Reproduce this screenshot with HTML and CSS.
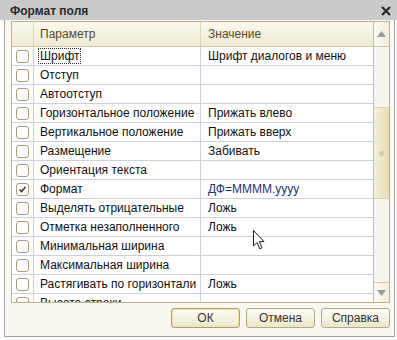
FILE: index.html
```html
<!DOCTYPE html>
<html lang="ru">
<head>
    <meta charset="UTF-8">
    <title>Формат поля</title>
    <link rel="stylesheet" href="styles.css">
</head>
<body>
    <div class="window">
        <div class="titlebar">
            <span class="title">Формат поля</span>
            <svg class="close" width="10" height="10" viewBox="0 0 10 10">
                <path d="M1 1 L9 9 M9 1 L1 9" stroke="#2b2b2b" stroke-width="2.2" fill="none"/>
            </svg>
        </div>

        <div class="dialog">
            <div class="table">
                <div class="grid">
                    <div class="row head">
                        <div class="cell check"></div>
                        <div class="cell">Параметр</div>
                        <div class="cell">Значение</div>
                    </div>
                    <div class="row">
                        <div class="cell check"><span class="box"></span></div>
                        <div class="cell"><span class="focus">Шрифт</span></div>
                        <div class="cell">Шрифт диалогов и меню</div>
                    </div>
                    <div class="row">
                        <div class="cell check"><span class="box"></span></div>
                        <div class="cell">Отступ</div>
                        <div class="cell"></div>
                    </div>
                    <div class="row">
                        <div class="cell check"><span class="box"></span></div>
                        <div class="cell">Автоотступ</div>
                        <div class="cell"></div>
                    </div>
                    <div class="row">
                        <div class="cell check"><span class="box"></span></div>
                        <div class="cell">Горизонтальное положение</div>
                        <div class="cell">Прижать влево</div>
                    </div>
                    <div class="row">
                        <div class="cell check"><span class="box"></span></div>
                        <div class="cell">Вертикальное положение</div>
                        <div class="cell">Прижать вверх</div>
                    </div>
                    <div class="row">
                        <div class="cell check"><span class="box"></span></div>
                        <div class="cell">Размещение</div>
                        <div class="cell">Забивать</div>
                    </div>
                    <div class="row">
                        <div class="cell check"><span class="box"></span></div>
                        <div class="cell">Ориентация текста</div>
                        <div class="cell"></div>
                    </div>
                    <div class="row">
                        <div class="cell check">
                            <span class="box">
                                <svg width="11" height="11" viewBox="0 0 11 11">
                                    <path d="M2.5 5.5 L4.5 7.5 L8.5 3" stroke="#333" stroke-width="1.6" fill="none"/>
                                </svg>
                            </span>
                        </div>
                        <div class="cell">Формат</div>
                        <div class="cell format">ДФ=ММММ.yyyy</div>
                    </div>
                    <div class="row">
                        <div class="cell check"><span class="box"></span></div>
                        <div class="cell">Выделять отрицательные</div>
                        <div class="cell">Ложь</div>
                    </div>
                    <div class="row">
                        <div class="cell check"><span class="box"></span></div>
                        <div class="cell">Отметка незаполненного</div>
                        <div class="cell">Ложь</div>
                    </div>
                    <div class="row">
                        <div class="cell check"><span class="box"></span></div>
                        <div class="cell">Минимальная ширина</div>
                        <div class="cell"></div>
                    </div>
                    <div class="row">
                        <div class="cell check"><span class="box"></span></div>
                        <div class="cell">Максимальная ширина</div>
                        <div class="cell"></div>
                    </div>
                    <div class="row">
                        <div class="cell check"><span class="box"></span></div>
                        <div class="cell">Растягивать по горизонтали</div>
                        <div class="cell">Ложь</div>
                    </div>
                    <div class="row">
                        <div class="cell check"><span class="box"></span></div>
                        <div class="cell">Высота строки</div>
                        <div class="cell"></div>
                    </div>
                </div>

                <div class="scrollbar">
                    <div class="sb-btn sb-up">
                        <svg width="9" height="6" viewBox="0 0 9 6"><path d="M4.5 0 L9 6 L0 6 Z" fill="#9b9b9b"/></svg>
                    </div>
                    <div class="sb-track">
                        <div class="sb-thumb"><span class="grip"></span></div>
                    </div>
                    <div class="sb-btn sb-down">
                        <svg width="9" height="6" viewBox="0 0 9 6"><path d="M0 0 L9 0 L4.5 6 Z" fill="#9b9b9b"/></svg>
                    </div>
                </div>
            </div>

            <div class="buttons">
                <button class="btn default">ОК</button>
                <button class="btn">Отмена</button>
                <button class="btn">Справка</button>
            </div>
        </div>

        <!-- указатель мыши -->
        <svg class="cursor" width="13" height="20" viewBox="0 0 13 20">
            <path d="M0.5 0.5 L0.5 16 L4 12.5 L6.8 18.8 L9 17.8 L6.3 11.6 L11 11.6 Z" fill="#fff" stroke="#222" stroke-width="1"/>
        </svg>
    </div>
</body>
</html>
```

FILE: styles.css
```css
body {
    margin: 0;
    background: #ffffff;
    font-family: 'Liberation Sans', Arial, sans-serif;
    font-size: 12px;
    color: #111;
}

.window {
    position: relative;
    width: 397px;
    height: 340px;
    overflow: hidden;
}

.titlebar {
    height: 20px;
    background: #cacaca;
    display: flex;
    align-items: center;
    justify-content: space-between;
    padding: 0 6px 0 10px;
}

.title {
    font-weight: bold;
    font-size: 12px;
    color: #2a2a2a;
    margin-top: 2px;
}

.close {
    margin-top: 2px;
}

.dialog {
    margin-left: 4px;
    width: 379px;
    background: #fbf9ef;
    border: 1px solid #a5a5a5;
    border-top: none;
    padding: 1px 4px 8px 6px;
}

.table {
    display: flex;
    height: 280px;
    border: 1px solid #bbb38f;
    background: #fff;
}

.grid {
    flex: 1;
    overflow: hidden;
}

.row {
    display: grid;
    grid-template-columns: 22px 167px 1fr;
    height: 18px;
    border-bottom: 1px solid #cbd1d8;
}

.cell {
    border-right: 1px solid #cbd1d8;
    padding-left: 6px;
    line-height: 19px;
    white-space: nowrap;
    overflow: hidden;
}

.cell:last-child {
    border-right: none;
    padding-left: 7px;
}

.row.head {
    height: 24px;
    background: linear-gradient(#fbf9ee, #efead2);
    border-bottom: 1px solid #cfc7a4;
}

.row.head .cell {
    line-height: 25px;
    color: #5a4824;
    border-right-color: #ddd5b4;
}

.cell.check {
    padding-left: 4px;
}

.box {
    display: block;
    width: 11px;
    height: 11px;
    margin-top: 3px;
    border: 1px solid #a39c7e;
    border-radius: 3px;
    background: #fff;
}

.box svg {
    display: block;
}

.focus {
    outline: 1px dotted #333;
    outline-offset: 0;
    padding: 0 1px;
    margin-left: -1px;
}

.format {
    color: #1c3570;
}

.scrollbar {
    width: 15px;
    border-left: 1px solid #c4bc9a;
    display: flex;
    flex-direction: column;
    background: #f8f6ec;
}

.sb-btn {
    display: flex;
    align-items: center;
    justify-content: center;
    background: linear-gradient(90deg, #fbfaf2, #f2eedb);
}

.sb-up {
    height: 24px;
    border-bottom: 1px solid #cfc7a4;
}

.sb-down {
    height: 19px;
    border-top: 1px solid #cfc7a4;
}

.sb-track {
    flex: 1;
}

.sb-thumb {
    margin-top: 60px;
    height: 90px;
    background: linear-gradient(90deg, #f5f0d9, #e6dcb2);
    border-top: 1px solid #ddd4ae;
    border-bottom: 1px solid #ddd4ae;
    display: flex;
    align-items: center;
    justify-content: center;
}

.grip {
    width: 5px;
    height: 5px;
    border-radius: 2px;
    background: #cfcab8;
}

.buttons {
    display: flex;
    justify-content: flex-end;
    gap: 6px;
    margin-top: 5px;
}

.btn {
    width: 69px;
    height: 20px;
    padding: 0;
    border: 1px solid #b2aa87;
    border-radius: 3px;
    background: linear-gradient(#fefdf7, #ece6cd);
    font-family: 'Liberation Sans', Arial, sans-serif;
    font-size: 12px;
    font-weight: normal;
    color: #333;
}

.btn.default {
    border-color: #a89f76;
    box-shadow: inset 0 0 0 1px #efe2a6;
}

.cursor {
    position: absolute;
    left: 253px;
    top: 230px;
}
```
